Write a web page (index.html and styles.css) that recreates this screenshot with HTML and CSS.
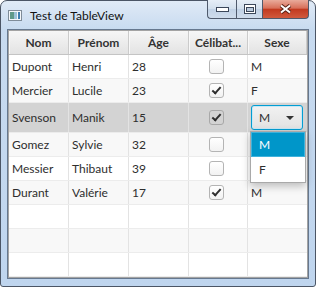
FILE: index.html
```html
<!DOCTYPE html>
<html lang="fr">
  <head>
    <meta charset="UTF-8" />
    <title>Test de TableView</title>
    <link rel="stylesheet" href="styles.css">
  </head>

  <body>
    <div class="window">
      <div class="titlebar">
        <svg class="app-icon" width="14" height="11" viewBox="0 0 14 11">
          <rect x="0.5" y="0.5" width="13" height="10" fill="#f4f7fa" stroke="#7f8c99" />
          <rect x="2" y="2" width="4" height="7" fill="#5f9a8a" />
          <rect x="6" y="2" width="3" height="7" fill="#9cc3d8" />
          <rect x="10" y="2" width="2" height="7" fill="#3d7fb0" />
        </svg>
        <span class="title">Test de TableView</span>
        <div class="controls">
          <div class="btn btn-min">
            <svg width="13" height="5" viewBox="0 0 13 5">
              <rect x="0.5" y="0.5" width="12" height="4" fill="#fff" stroke="#3b475a" />
            </svg>
          </div>
          <div class="btn btn-max">
            <svg width="12" height="10" viewBox="0 0 12 10">
              <rect x="0.5" y="0.5" width="11" height="9" fill="#fff" stroke="#3b475a" />
              <rect x="2.5" y="3.5" width="7" height="4" fill="#b9c9dc" stroke="#3b475a" />
            </svg>
          </div>
          <div class="btn btn-close">
            <svg width="13" height="10" viewBox="0 0 13 10">
              <path d="M2 1.5 L11 8.5 M11 1.5 L2 8.5" stroke="#5a2418" stroke-width="4" />
              <path d="M2 1.5 L11 8.5 M11 1.5 L2 8.5" stroke="#fff" stroke-width="2" />
            </svg>
          </div>
        </div>
      </div>

      <div class="client">
        <div class="table">
          <div class="row head">
            <div class="cell">Nom</div>
            <div class="cell">Prénom</div>
            <div class="cell">Âge</div>
            <div class="cell">Célibat...</div>
            <div class="cell">Sexe</div>
          </div>

          <div class="row">
            <div class="cell">Dupont</div>
            <div class="cell">Henri</div>
            <div class="cell">28</div>
            <div class="cell center"><span class="check"></span></div>
            <div class="cell">M</div>
          </div>
          <div class="row odd">
            <div class="cell">Mercier</div>
            <div class="cell">Lucile</div>
            <div class="cell">23</div>
            <div class="cell center"><span class="check on"></span></div>
            <div class="cell">F</div>
          </div>
          <div class="row selected editing">
            <div class="cell">Svenson</div>
            <div class="cell">Manik</div>
            <div class="cell">15</div>
            <div class="cell center"><span class="check on"></span></div>
            <div class="cell combo-cell">
              <div class="combo">
                <span>M</span>
                <span class="arrow"></span>
              </div>
              <ul class="popup">
                <li class="picked">M</li>
                <li>F</li>
              </ul>
            </div>
          </div>
          <!-- Sexe of the next two rows sits under the open popup -->
          <div class="row odd">
            <div class="cell">Gomez</div>
            <div class="cell">Sylvie</div>
            <div class="cell">32</div>
            <div class="cell center"><span class="check"></span></div>
            <div class="cell"></div>
          </div>
          <div class="row">
            <div class="cell">Messier</div>
            <div class="cell">Thibaut</div>
            <div class="cell">39</div>
            <div class="cell center"><span class="check"></span></div>
            <div class="cell"></div>
          </div>
          <div class="row odd">
            <div class="cell">Durant</div>
            <div class="cell">Valérie</div>
            <div class="cell">17</div>
            <div class="cell center"><span class="check on"></span></div>
            <div class="cell">M</div>
          </div>

          <div class="row">
            <div class="cell"></div><div class="cell"></div><div class="cell"></div><div class="cell"></div><div class="cell"></div>
          </div>
          <div class="row odd">
            <div class="cell"></div><div class="cell"></div><div class="cell"></div><div class="cell"></div><div class="cell"></div>
          </div>
          <div class="row">
            <div class="cell"></div><div class="cell"></div><div class="cell"></div><div class="cell"></div><div class="cell"></div>
          </div>
        </div>
      </div>
    </div>
  </body>
</html>
```

FILE: styles.css
```css
body {
  margin: 0;
  background: #fff;
  font-family: Lato, "Noto Sans", sans-serif;
  font-size: 12px;
  color: #2e2e2e;
}

.window {
  width: 316px;
  height: 287px;
  box-sizing: border-box;
  border: 1px solid #4b5565;
  border-radius: 7px 7px 3px 3px;
  background: linear-gradient(#e0eaf6, #c8dbf0 28px, #bfd5ee);
  padding: 0 6px 7px;
  display: flex;
  flex-direction: column;
}

.titlebar {
  height: 28px;
  display: flex;
  align-items: center;
}

.app-icon {
  margin-left: 1px;
  margin-top: 1px;
}

.title {
  margin-left: 8px;
  color: #111;
}

.controls {
  margin-left: auto;
  align-self: flex-start;
  display: flex;
  height: 19px;
  margin-top: -1px;
}

.btn {
  box-sizing: border-box;
  height: 19px;
  border: 1px solid #4f5a6c;
  border-top: none;
  display: flex;
  align-items: center;
  justify-content: center;
  background: linear-gradient(#e6eef7, #d2dfed 50%, #c1d2e6 51%, #cfdcec);
}

.btn-min {
  width: 29px;
  border-radius: 0 0 0 4px;
  border-right: none;
}

.btn-max {
  width: 26px;
  border-right: none;
}

.btn-close {
  width: 47px;
  border-radius: 0 0 4px 0;
  background: linear-gradient(#e9ab9b, #d8705a 45%, #c23a20 52%, #d15a3e);
}

.client {
  flex: 1;
  border: 1px solid #66788f;
  background: #fff;
}

.table {
  height: 100%;
  box-sizing: border-box;
  border: 1px solid #a3a3a3;
}

.row {
  display: grid;
  grid-template-columns: 60px 60px 60px 59px 59px;
  height: 24px;
  box-sizing: border-box;
  border-bottom: 1px solid #ececec;
  background: #fff;
}

.row.odd {
  background: #f8f8f8;
}

.row.selected {
  background: #d3d3d3;
}

.row.editing {
  height: 30px;
}

.row.head {
  height: 24px;
  border-bottom: 1px solid #c4c4c4;
  background: linear-gradient(#f6f6f6, #e3e3e3);
}

.cell {
  display: flex;
  align-items: center;
  padding-left: 3px;
  border-right: 1px solid #e3e3e3;
  white-space: nowrap;
  overflow: hidden;
}

.cell:last-child {
  border-right: none;
}

.head .cell {
  justify-content: center;
  padding-left: 0;
  font-weight: bold;
  color: #333;
  border-right: 1px solid #cbcbcb;
  box-shadow: inset 1px 0 0 #f8f8f8;
}

.cell.center {
  justify-content: center;
  padding-left: 0;
}

.check {
  width: 15px;
  height: 15px;
  box-sizing: border-box;
  border: 1px solid #b4b4b4;
  border-radius: 3px;
  background: linear-gradient(#ffffff, #f2f2f2);
  display: flex;
  align-items: center;
  justify-content: center;
  margin-left: -4px;
}

.check.on::after {
  content: "";
  width: 7px;
  height: 3px;
  border-left: 2px solid #2e2e2e;
  border-bottom: 2px solid #2e2e2e;
  transform: rotate(-48deg);
  margin-top: -3px;
}

.selected .check {
  background: #d3d3d3;
  border-color: #a8a8a8;
}

.combo-cell {
  position: relative;
  overflow: visible;
  padding-left: 3px;
}

.combo {
  width: 52px;
  height: 25px;
  box-sizing: border-box;
  border: 1px solid #039ed3;
  border-radius: 3px;
  box-shadow: inset 0 0 0 1px #c9e8f5;
  background: linear-gradient(#f2f2f2, #e2e2e2);
  display: flex;
  align-items: center;
  padding: 0 8px 0 7px;
  justify-content: space-between;
}

.arrow {
  width: 0;
  height: 0;
  border-left: 4px solid transparent;
  border-right: 4px solid transparent;
  border-top: 4px solid #333;
}

.popup {
  position: absolute;
  left: 2px;
  top: 28px;
  width: 56px;
  margin: 0;
  padding: 0;
  list-style: none;
  box-sizing: border-box;
  border: 1px solid #a9a9a9;
  background: #fff;
  box-shadow: 0 3px 8px rgba(0, 0, 0, 0.25);
  z-index: 2;
}

.popup li {
  height: 25px;
  display: flex;
  align-items: center;
  padding-left: 8px;
}

.popup li.picked {
  background: #0096c9;
  color: #fff;
  box-shadow: inset 0 0 0 1px #3fb2dc;
}
```
